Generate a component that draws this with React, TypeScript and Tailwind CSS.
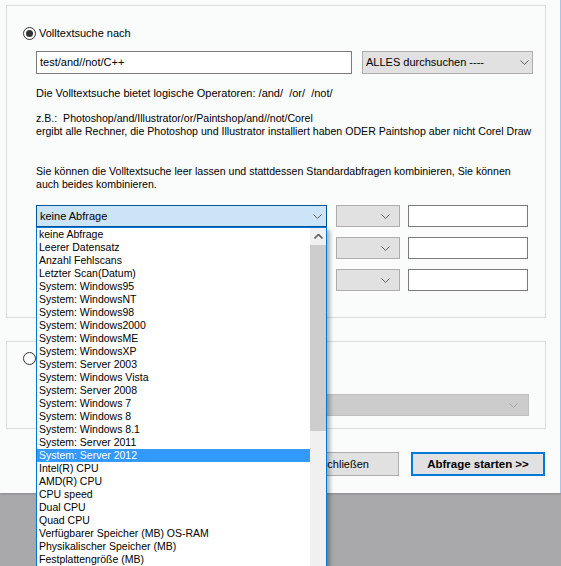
import React from "react";

const items = [
  "keine Abfrage",
  "Leerer Datensatz",
  "Anzahl Fehlscans",
  "Letzter Scan(Datum)",
  "System: Windows95",
  "System: WindowsNT",
  "System: Windows98",
  "System: Windows2000",
  "System: WindowsME",
  "System: WindowsXP",
  "System: Server 2003",
  "System: Windows Vista",
  "System: Server 2008",
  "System: Windows 7",
  "System: Windows 8",
  "System: Windows 8.1",
  "System: Server 2011",
  "System: Server 2012",
  "Intel(R) CPU",
  "AMD(R) CPU",
  "CPU speed",
  "Dual CPU",
  "Quad CPU",
  "Verfügbarer Speicher (MB) OS-RAM",
  "Physikalischer Speicher (MB)",
  "Festplattengröße (MB)",
];

function Chevron({ color = "#606060", up = false }: { color?: string; up?: boolean }) {
  return (
    <svg width="9" height="5" viewBox="0 0 9 5" className="shrink-0">
      <polyline
        points={up ? "0.5,4.5 4.5,0.5 8.5,4.5" : "0.5,0.5 4.5,4.5 8.5,0.5"}
        fill="none"
        stroke={color}
        strokeWidth={up ? 1.6 : 1}
      />
    </svg>
  );
}

function Radio({ checked }: { checked?: boolean }) {
  return (
    <div className="w-[13px] h-[13px] rounded-full border border-[#333333] bg-white flex items-center justify-center shrink-0">
      {checked && <div className="w-[7px] h-[7px] rounded-full bg-[#333333]" />}
    </div>
  );
}

function SmallCombo() {
  return (
    <div className="w-[64px] h-[22px] bg-[#e1e1e1] border border-[#adadad] flex items-center justify-end pr-[9px]">
      <Chevron />
    </div>
  );
}

function TextBox() {
  return <div className="w-[120px] h-[22px] bg-white border border-[#7a7a7a]" />;
}

function ComboRow({ first }: { first?: boolean }) {
  return (
    <div className="flex items-center">
      {first ? (
        <div className="w-[291px] h-[22px] bg-[#cce4f7] border border-[#005499] flex items-center justify-between pl-[3px] pr-[4px] text-[11px]">
          <span>keine Abfrage</span>
          <Chevron />
        </div>
      ) : (
        <div className="w-[291px] h-[22px]" />
      )}
      <div className="ml-[9px]">
        <SmallCombo />
      </div>
      <div className="ml-[8px]">
        <TextBox />
      </div>
    </div>
  );
}

export default function App() {
  return (
    <div
      className="relative w-[561px] h-[566px] overflow-hidden bg-[#a9a9ab] text-[10.6px] leading-[13px] text-black"
      style={{ fontFamily: '"Liberation Sans", Arial, sans-serif' }}
    >
      {/* window */}
      <div className="w-[561px] h-[493px] bg-[#fafcfc] border-r border-[#a5c6e8] pt-[5px] pl-[6px] shadow-[0_1px_2px_rgba(0,0,0,0.2)]">
        {/* group box 1 */}
        <div className="w-[540px] h-[313px] border border-[#dcdcdc] pl-[29px] pt-[21px] whitespace-nowrap">
          <div className="flex items-center gap-[3px] -ml-[13px] h-[13px] text-[11px]">
            <Radio checked />
            <span>Volltextsuche nach</span>
          </div>
          <div className="flex items-center mt-[11px] gap-[10px] text-[11px]">
            <div className="w-[316px] h-[23px] bg-white border border-[#7a7a7a] flex items-center pl-[3px]">
              test/and//not/C++
            </div>
            <div className="w-[171px] h-[23px] bg-[#e1e1e1] border border-[#adadad] flex items-center justify-between pl-[3px] pr-[3px]">
              <span>ALLES durchsuchen ----</span>
              <Chevron />
            </div>
          </div>
          <div className="mt-[13px] text-[11px]">Die Volltextsuche bietet logische Operatoren: /and/&nbsp; /or/&nbsp; /not/</div>
          <div className="mt-[12px]">z.B.:&nbsp; Photoshop/and/Illustrator/or/Paintshop/and//not/Corel</div>
          <div>ergibt alle Rechner, die Photoshop und Illustrator installiert haben ODER Paintshop aber nicht Corel Draw</div>
          <div className="mt-[27px]">
            Sie können die Volltextsuche leer lassen und stattdessen Standardabfragen kombinieren, Sie können
          </div>
          <div>auch beides kombinieren.</div>
          <div className="mt-[14px] flex flex-col gap-[10px]">
            <ComboRow first />
            <ComboRow />
            <ComboRow />
          </div>
        </div>
        {/* group box 2 */}
        <div className="mt-[23px] w-[540px] h-[88px] border border-[#dcdcdc] pl-[29px] pt-[10px]">
          <div className="-ml-[13px] h-[13px] flex items-center">
            <Radio />
          </div>
          <div className="mt-[29px] w-[493px] h-[22px] bg-[#cccccc] border border-[#bfbfbf] flex items-center justify-end pr-[10px]">
            <Chevron color="#a8a8a8" />
          </div>
        </div>
        {/* buttons */}
        <div className="mt-[23px] flex gap-[12px] pl-[284px] text-[11px]">
          <div className="w-[109px] h-[24px] bg-[#e1e1e1] border border-[#adadad] flex items-center justify-center">
            Schließen
          </div>
          <div className="w-[134px] h-[24px] bg-[#e1e1e1] border-2 border-[#0078d7] flex items-center justify-center font-bold text-[11.5px]">
            Abfrage starten &gt;&gt;
          </div>
        </div>
      </div>

      {/* open dropdown list */}
      <div className="absolute left-[36px] top-[227px] w-[291px] h-[360px] bg-white border border-[#0078d7] shadow-[3px_3px_4px_rgba(0,0,0,0.3)] flex text-[10.5px]">
        <div className="flex-1 flex flex-col">
          {items.map((it, i) => (
            <div
              key={i}
              className={
                i === 17
                  ? "h-[13px] leading-[13px] pl-[2px] bg-[#3399ff] text-white outline outline-1 outline-dotted outline-[#c08040] -outline-offset-1 whitespace-nowrap"
                  : "h-[13px] leading-[13px] pl-[2px] whitespace-nowrap"
              }
            >
              {it}
            </div>
          ))}
        </div>
        <div className="w-[16px] bg-[#f0f0f0] flex flex-col">
          <div className="h-[17px] flex items-center justify-center">
            <Chevron up color="#606060" />
          </div>
          <div className="h-[186px] bg-[#cdcdcd]" />
        </div>
      </div>
    </div>
  );
}
